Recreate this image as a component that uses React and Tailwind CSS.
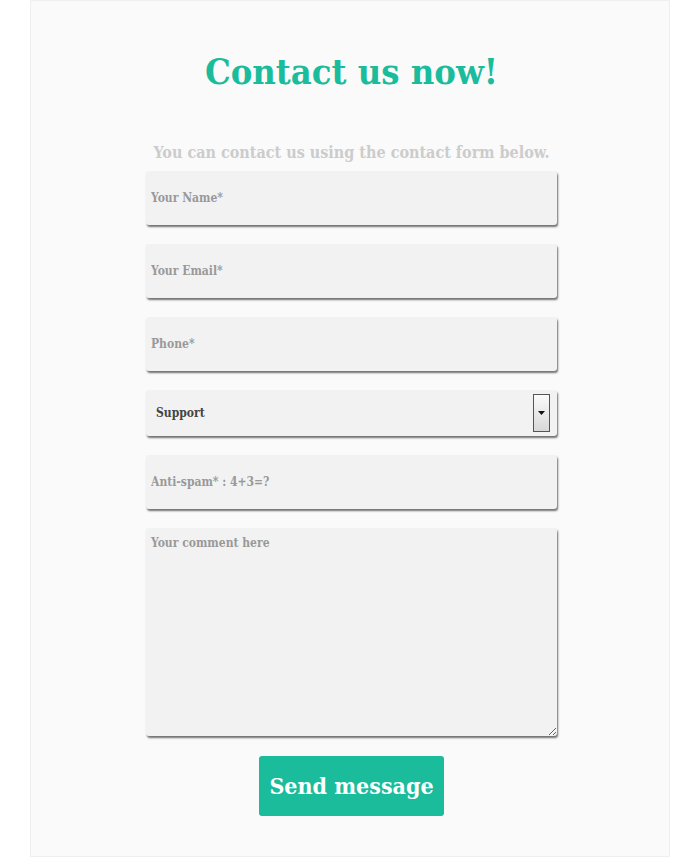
import React from "react";

const font = { fontFamily: '"DejaVu Serif Condensed", "DejaVu Serif", serif' };

function Field({ placeholder }) {
  return (
    <input
      type="text"
      placeholder={placeholder}
      className="block w-full h-[54px] rounded-[3px] bg-[#f2f2f2] px-[5px] text-[12px] font-bold text-[#555] outline-none placeholder:text-[#999] shadow-[1px_2px_2px_rgba(0,0,0,0.55)]"
      style={font}
    />
  );
}

export default function App() {
  return (
    <div className="min-h-[857px] bg-white" style={font}>
      <div className="ml-[30px] w-[640px] min-h-[857px] bg-[#fafafa] border border-[#efefef]">
        <div className="ml-[115px] w-[411px] flex flex-col items-center">
          <h1 className="mt-[46px] text-[36px] leading-[48px] font-bold text-[#1abc9c] whitespace-nowrap" style={font}>
            Contact us now!
          </h1>
          <p className="mt-[48px] text-[16px] leading-[20px] font-bold text-[#cccccc] whitespace-nowrap">
            You can contact us using the contact form below.
          </p>
          <div className="mt-[8px] w-full flex flex-col gap-[19px]">
            <Field placeholder="Your Name*" />
            <Field placeholder="Your Email*" />
            <Field placeholder="Phone*" />
            <div className="relative h-[46px] w-full rounded-[3px] bg-[#f2f2f2] shadow-[1px_2px_2px_rgba(0,0,0,0.55)] flex items-center pl-[10px]">
              <span className="text-[12px] font-bold text-[#444]">Support</span>
              <div className="absolute right-[7px] top-[4px] w-[17px] h-[38px] border border-[#555] bg-gradient-to-b from-[#fbfbfb] to-[#d8d8d8] flex items-center justify-center">
                <svg width="7" height="4" viewBox="0 0 7 4"><path d="M0 0h7L3.5 4z" fill="#111" /></svg>
              </div>
            </div>
            <Field placeholder="Anti-spam* : 4+3=?" />
            <textarea
              placeholder="Your comment here"
              className="block w-full h-[208px] rounded-[3px] bg-[#f2f2f2] px-[5px] py-[6px] text-[12px] font-bold text-[#555] outline-none placeholder:text-[#999] shadow-[1px_2px_2px_rgba(0,0,0,0.55)] resize"
              style={font}
            />
          </div>
          <button
            className="mt-[20px] w-[185px] h-[60px] rounded-[3px] bg-[#1abc9c] text-white text-[23px] font-bold"
            style={font}
          >
            Send message
          </button>
        </div>
      </div>
    </div>
  );
}
